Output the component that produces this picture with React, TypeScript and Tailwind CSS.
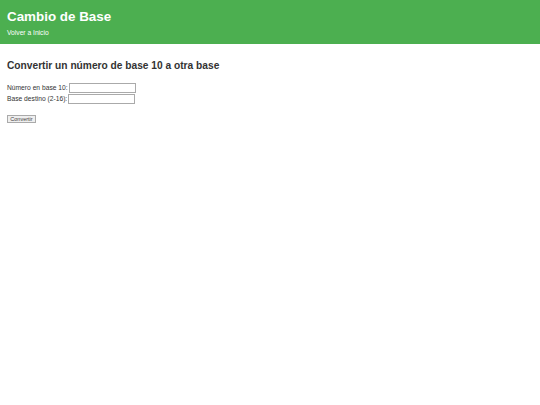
export default function App() {
  return (
    <div className="min-h-screen bg-white font-['Liberation_Sans',Arial,sans-serif] text-[#333]">
      <header className="bg-[#4caf50] px-[7px] pt-[9px] pb-[7px] text-white">
        <h1 className="text-[13.4px] font-bold leading-[16px]">Cambio de Base</h1>
        <a href="#" className="mt-[3px] block text-[6.7px] leading-[9px] text-white">
          Volver a Inicio
        </a>
      </header>
      <main className="px-[7px] pt-[15px]">
        <h2 className="text-[10.2px] font-bold leading-[14px]">
          Convertir un número de base 10 a otra base
        </h2>
        <form
          className="mt-[10px] flex flex-col gap-[1px] text-[6.7px] text-[#333]"
          onSubmit={(e) => e.preventDefault()}
        >
          <div className="flex h-[10px] items-center">
            <label htmlFor="numero">Número en base 10:</label>
            <input
              id="numero"
              type="text"
              className="ml-[1px] h-[10px] w-[67px] border border-[#aaa] bg-white"
            />
          </div>
          <div className="flex h-[10px] items-center">
            <label htmlFor="base">Base destino (2-16):</label>
            <input
              id="base"
              type="text"
              className="ml-[1px] h-[10px] w-[67px] border border-[#aaa] bg-white"
            />
          </div>
          <div className="mt-[9px]">
            <button
              type="submit"
              className="h-[8px] w-[29px] border border-[#aaa] bg-[#efefef] text-[5.5px] leading-[6px] text-[#444]"
            >
              Convertir
            </button>
          </div>
        </form>
      </main>
    </div>
  );
}
